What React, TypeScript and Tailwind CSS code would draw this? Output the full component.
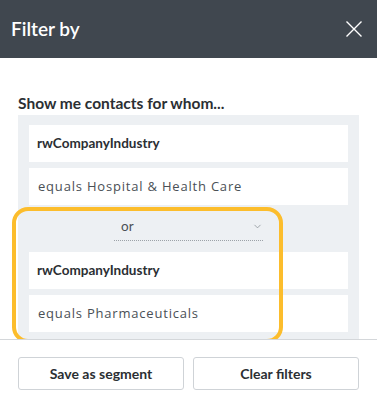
import { ChevronDown } from 'lucide-react';

const conditions = [
  { field: 'rwCompanyIndustry', value: 'equals Hospital & Health Care' },
  { field: 'rwCompanyIndustry', value: 'equals Pharmaceuticals' },
];

function ConditionBoxes({ field, value }: { field: string; value: string }) {
  return (
    <div className="flex flex-col gap-[6px]">
      <div className="h-[37px] bg-white flex items-center px-[8px] text-[13.5px] font-bold text-[#2b2f33] font-['Lato',sans-serif]">
        {field}
      </div>
      <div className="h-[37px] bg-white flex items-center px-[9px] text-[13px] tracking-[0.8px] text-[#4a5056] font-['Open_Sans',sans-serif]">
        {value}
      </div>
    </div>
  );
}

export default function App() {
  return (
    <div className="w-[377px] h-[402px] bg-white flex flex-col font-['Lato',sans-serif] overflow-hidden">
      <div className="h-[58px] shrink-0 bg-[#40474f] flex items-center justify-between pl-[11px] pr-[15px]">
        <span className="text-white text-[19px] font-semibold">Filter by</span>
        <svg width="16" height="16" viewBox="0 0 16 16" className="text-white">
          <path d="M0.5 0.5 L15.5 15.5 M15.5 0.5 L0.5 15.5" stroke="currentColor" strokeWidth="1.4" />
        </svg>
      </div>

      <div className="h-[281px] shrink-0 overflow-hidden px-[18px] pt-[34px]">
        <div className="text-[15.5px] font-bold text-[#2b2f33] leading-[22px] mb-[1px]">
          Show me contacts for whom...
        </div>
        <div className="relative bg-[#edf0f3] px-[11px] pt-[10px] pb-[12px]">
          <ConditionBoxes {...conditions[0]} />
          <div className="flex justify-center pt-[8px] pb-[11px]">
            <div className="w-[149px] h-[28px] flex items-center justify-between pl-[7px] pr-0 border-b border-dotted border-[#9ca2a8] text-[13.5px] text-[#4a5056]">
              <span>or</span>
              <ChevronDown className="w-[11px] h-[11px] text-[#7d848b]" strokeWidth={1.5} />
            </div>
          </div>
          <ConditionBoxes {...conditions[1]} />
          <div className="h-[40px]" />
          <div className="absolute left-[-6px] top-[92px] w-[271px] h-[136px] border-[4px] border-[#fcbd2c] rounded-[16px] pointer-events-none" />
        </div>
      </div>

      <div className="border-t border-[#d4d7da] flex gap-[9px] px-[18px] pt-[17px]">
        <button className="flex-1 h-[33px] border border-[#cfd3d7] rounded-[3px] bg-white text-[14px] font-bold text-[#2b2f33]">
          Save as segment
        </button>
        <button className="flex-1 h-[33px] border border-[#cfd3d7] rounded-[3px] bg-white text-[14px] font-bold text-[#2b2f33]">
          Clear filters
        </button>
      </div>
    </div>
  );
}
